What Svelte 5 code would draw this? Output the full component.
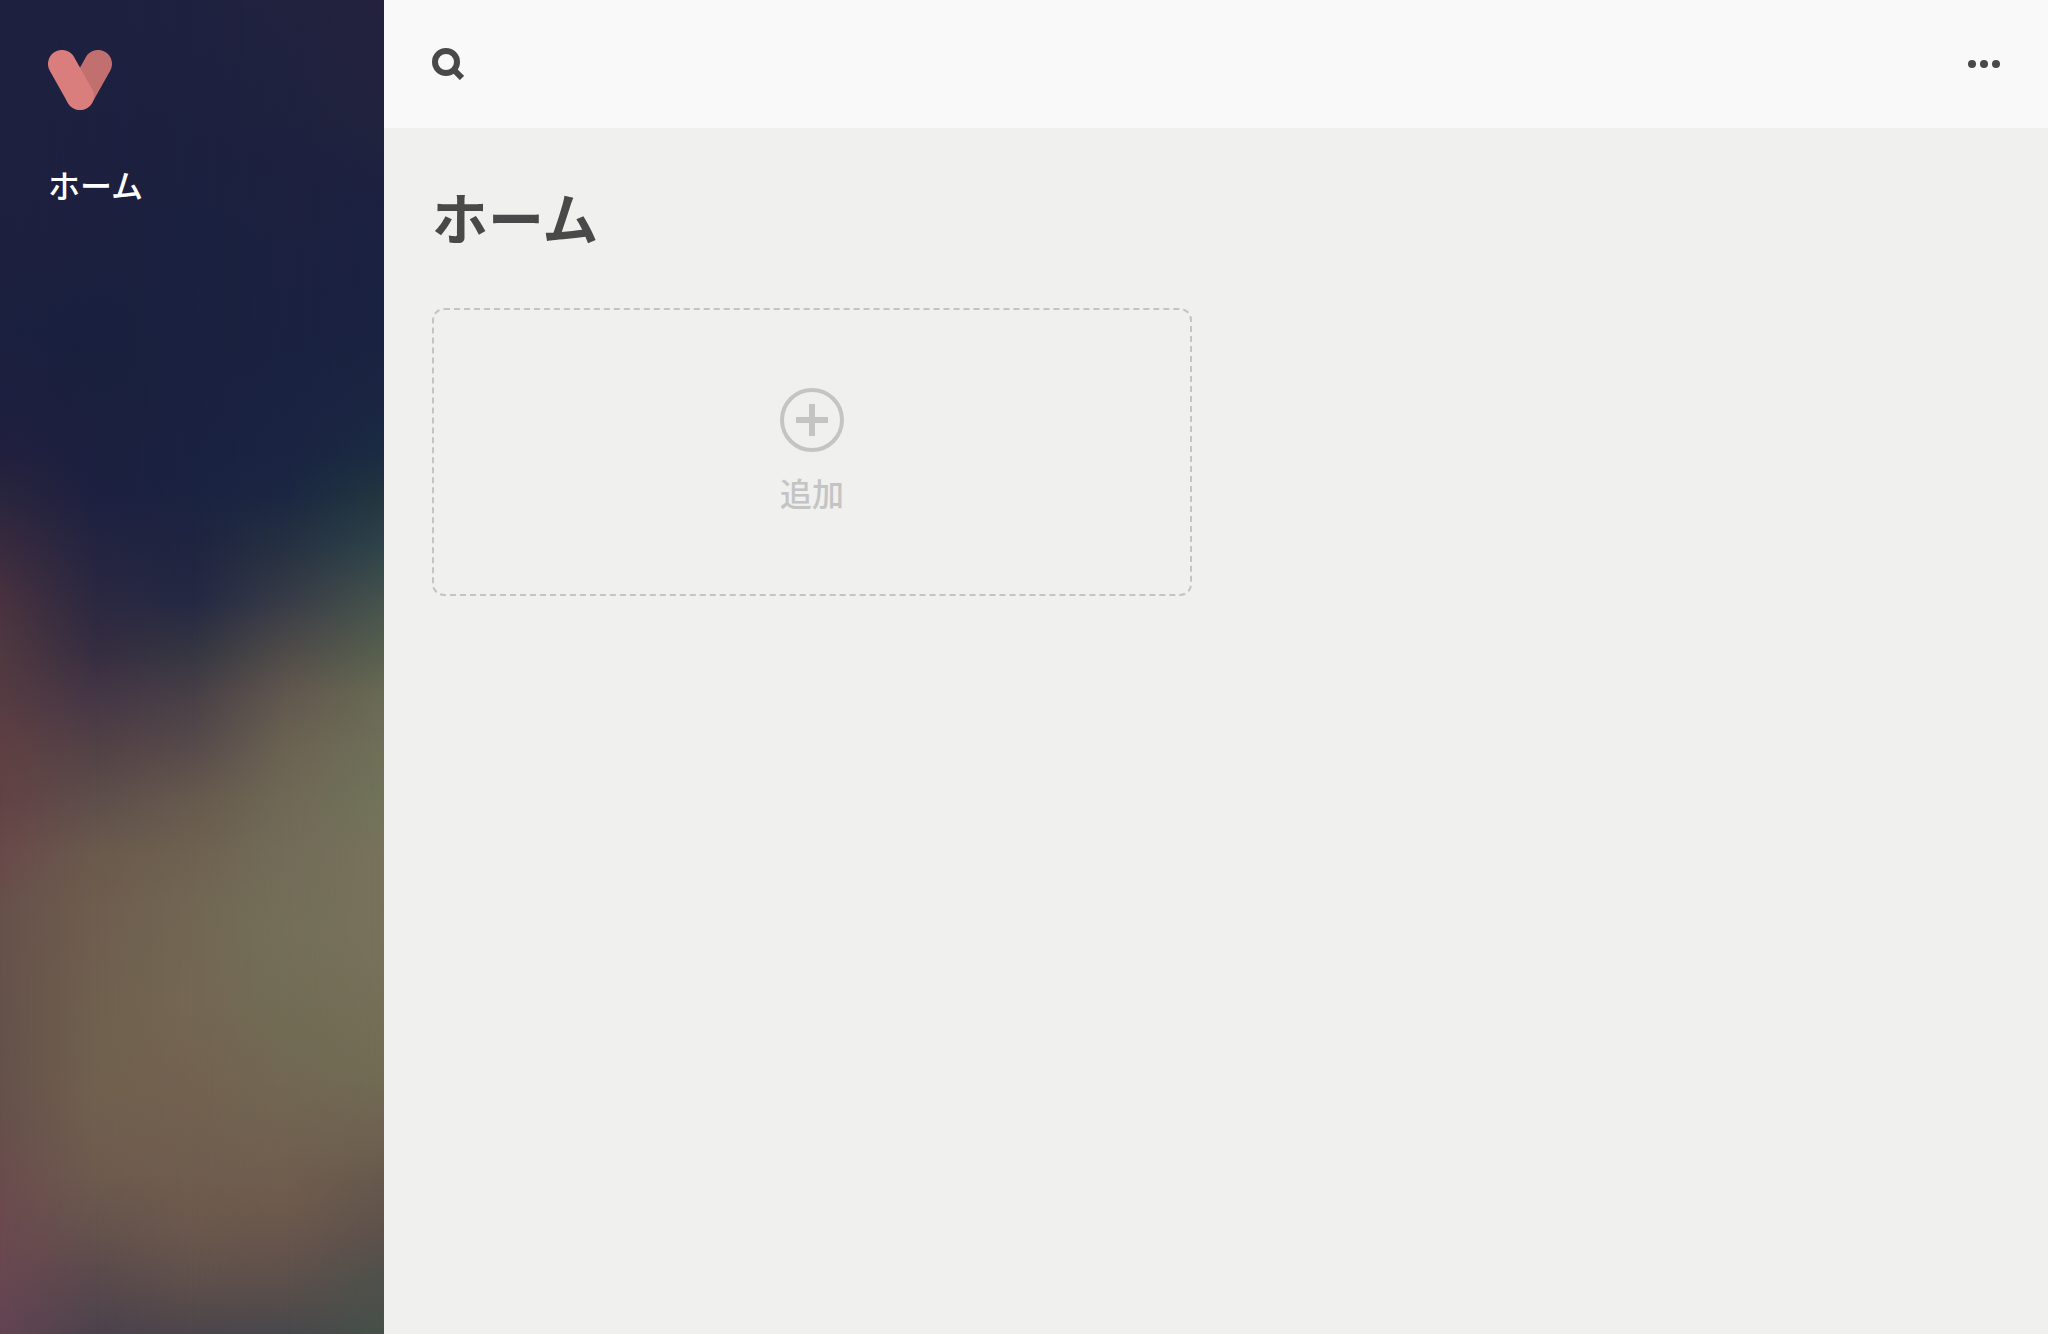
<script lang="ts">
	interface MenuItem {
		label: string;
		href: string;
	}

	interface Band {
		start: number;
		end: number;
		stops: string;
	}

	const menu: MenuItem[] = [{ label: 'ホーム', href: '#home' }];

	// Each band fades in from start to end over the one before it.
	const bands: Band[] = [
		{
			start: 0,
			end: 0,
			stops:
				'#1e2140 0%, #1e203f 17%, #1a203e 25%, #1e1f3f 30%, #221f3f 34%, #29253d 37%, #3a2b3e 41%, #49323f 45%, #503940 49%, #553b42 52%, #5f4043 56%, #624345 60%, #694a4a 64%, #67514a 68%, #65524a 75%, #64524a 79%, #66504b 84%, #6b4b4e 90%, #6a4850 94%, #624452 100%'
		},
		{
			start: 0,
			end: 25,
			stops:
				'#1e213f 0%, #1d203f 15%, #18203e 26%, #1a203d 30%, #1c203f 34%, #1d2040 37%, #232441 41%, #2b2840 45%, #362d41 49%, #443645 52%, #524145 56%, #5e4e4b 60%, #6a5a4d 64%, #6f5d4e 68%, #70604e 75%, #71604e 82%, #6e5b4e 88%, #65534d 92%, #5c4b4c 95%, #4c424c 100%'
		},
		{
			start: 25,
			end: 50,
			stops:
				'#1f213f 0%, #1a213f 19%, #1a2240 34%, #1a2340 37%, #1f2440 41%, #242843 45%, #353641 49%, #473f46 52%, #574a4b 56%, #665a4e 60%, #6f6150 64%, #716753 68%, #746753 75%, #736250 81%, #6f5d4e 88%, #6b584d 92%, #5f504c 96%, #4c454a 100%'
		},
		{
			start: 50,
			end: 75,
			stops:
				'#21223e 0%, #1d213f 12%, #1a2240 26%, #1a2442 34%, #1b2742 37%, #263141 41%, #383c47 45%, #504c49 49%, #62574f 52%, #6b6352 56%, #706955 60%, #726d58 64%, #746f59 70%, #716c55 76%, #726853 81%, #716150 86%, #6e5b4d 90%, #64534c 94%, #584e4b 97%, #48484b 100%'
		},
		{
			start: 75,
			end: 100,
			stops:
				'#24223e 0%, #22233e 8%, #1c2140 15%, #1a2340 26%, #1a2642 30%, #1b2b42 34%, #21363f 37%, #2f444a 41%, #45534c 45%, #57604f 49%, #686a54 52%, #6f6f58 56%, #70735a 60%, #77725c 64%, #76715a 72%, #726c55 80%, #6d604f 86%, #65574c 89%, #5b504b 93%, #4e504b 96%, #465048 100%'
		}
	];
</script>

<div class="app">
	<aside class="sidebar">
		<div class="backdrop" aria-hidden="true">
			{#each bands as band}
				<div
					class="band"
					style:background-image="linear-gradient({band.stops})"
					style:mask-image={band.end
						? `linear-gradient(90deg, transparent ${band.start}%, #000 ${band.end}%)`
						: 'none'}
				></div>
			{/each}
		</div>
		<a class="logo" href="#home" aria-label="ホーム">
			<svg viewBox="0 0 64 60" width="64" height="60">
				<path d="M50 14 L32 46" stroke="#c16f6f" stroke-width="28" stroke-linecap="round" />
				<path d="M14 14 L32 46" stroke="#d97d7d" stroke-width="28" stroke-linecap="round" />
			</svg>
		</a>
		<nav>
			{#each menu as item}
				<a class="menu-item" href={item.href}>{item.label}</a>
			{/each}
		</nav>
	</aside>

	<div class="page">
		<header class="toolbar">
			<button class="icon-button" type="button" aria-label="検索">
				<svg viewBox="0 0 32 32" width="32" height="32">
					<circle cx="14" cy="14" r="11" fill="none" stroke="currentColor" stroke-width="6" />
					<path d="M21.5 21.5 L30 30" stroke="currentColor" stroke-width="6" />
				</svg>
			</button>
			<button class="icon-button" type="button" aria-label="メニュー">
				<svg viewBox="0 0 32 32" width="32" height="32" fill="currentColor">
					<circle cx="4" cy="16" r="4" />
					<circle cx="16" cy="16" r="4" />
					<circle cx="28" cy="16" r="4" />
				</svg>
			</button>
		</header>

		<main class="content">
			<h1 class="title">ホーム</h1>
			<div class="cards">
				<button class="add-card" type="button">
					<svg viewBox="0 0 64 64" width="64" height="64" fill="none" stroke="currentColor">
						<circle cx="32" cy="32" r="30" stroke-width="4" />
						<path d="M16 32 H48 M32 16 V48" stroke-width="6" />
					</svg>
					<span>追加</span>
				</button>
			</div>
		</main>
	</div>
</div>

<style>
	:global(body) {
		margin: 0;
		background: #f0f0ee;
	}

	.app {
		display: flex;
		min-height: 100vh;
		font-family: 'Noto Sans CJK JP', sans-serif;
		color: #494949;
	}

	.sidebar {
		position: relative;
		box-sizing: border-box;
		flex: 0 0 384px;
		padding: 50px 48px;
		background: #1e2140;
	}

	.backdrop,
	.band {
		position: absolute;
		inset: 0;
	}

	.logo {
		position: relative;
		display: block;
		height: 60px;
		margin-bottom: 50px;
	}

	.logo svg {
		display: block;
		fill: none;
	}

	.menu-item {
		position: relative;
		display: block;
		font-size: 32px;
		font-weight: 500;
		line-height: 48px;
		color: #fff;
		text-decoration: none;
	}

	.page {
		flex: 1;
		min-width: 0;
	}

	.toolbar {
		display: flex;
		align-items: center;
		justify-content: space-between;
		height: 128px;
		padding: 0 48px;
		background: #f9f9f9;
	}

	button {
		font: inherit;
		background: none;
		cursor: pointer;
	}

	.icon-button {
		padding: 0;
		border: 0;
		color: #494949;
	}

	.icon-button svg {
		display: block;
	}

	.content {
		padding: 48px;
	}

	.title {
		margin: 0 0 52px;
		font-size: 56px;
		font-weight: 700;
		line-height: 80px;
	}

	.cards {
		display: grid;
		grid-template-columns: 1fr 1fr;
		gap: 48px;
	}

	.add-card {
		display: flex;
		flex-direction: column;
		align-items: center;
		justify-content: center;
		gap: 16px;
		height: 288px;
		padding: 0;
		border: 2px dashed #c4c4c4;
		border-radius: 12px;
		font-size: 32px;
		font-weight: 500;
		line-height: 48px;
		color: #c4c4c4;
	}
</style>
